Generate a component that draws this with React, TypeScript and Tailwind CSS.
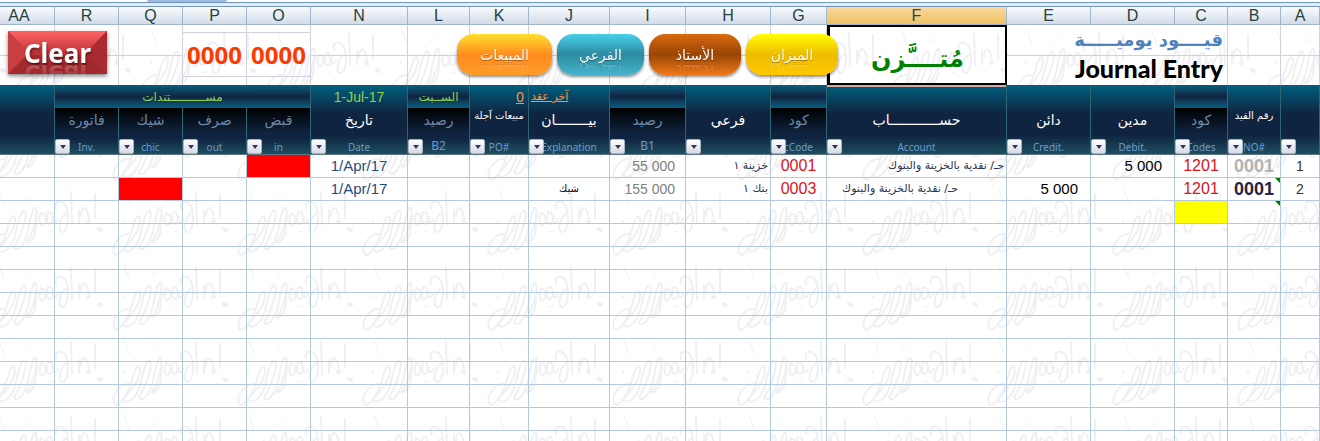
import type { ReactNode } from 'react';
import clsx from 'clsx';

interface Column {
  letter: string;
  width: string;
  title?: string;
  latin?: string;
  note?: string;
  small?: boolean;
  calculated?: boolean;
  noFilter?: boolean;
  latinSize?: string;
}

// The sheet runs from right to left, so column A comes first.
const columns: Column[] = [
  { letter: 'A', width: 'w-[39px]' },
  { letter: 'B', width: 'w-[53px]', title: 'رقم القيد', latin: 'NO#', small: true },
  { letter: 'C', width: 'w-[53px]', title: 'كود', latin: 'Codes', calculated: true },
  { letter: 'D', width: 'w-[84px]', title: 'مدين', latin: 'Debit.' },
  { letter: 'E', width: 'w-[84px]', title: 'دائن', latin: 'Credit.' },
  { letter: 'F', width: 'w-[180px]', title: 'حســــــــــــاب', latin: 'Account' },
  { letter: 'G', width: 'w-[56px]', title: 'كود', latin: 'cCode', calculated: true },
  { letter: 'H', width: 'w-[85px]', title: 'فرعي' },
  { letter: 'I', width: 'w-[76px]', title: 'رصيد', latin: 'B1', calculated: true, latinSize: 'text-xs' },
  { letter: 'J', width: 'w-[81px]', title: 'بيــــــــان', latin: 'Explanation', note: 'آخر عقد' },
  { letter: 'K', width: 'w-[59px]', title: 'مبيعات آجلة', latin: 'PO#', note: '0', small: true },
  { letter: 'L', width: 'w-[62px]', title: 'رصيد', latin: 'B2', note: 'الســبت', calculated: true, latinSize: 'text-xs' },
  { letter: 'N', width: 'w-[97px]', title: 'تاريخ', latin: 'Date', note: '1-Jul-17' },
  { letter: 'O', width: 'w-[64px]', title: 'قبض', latin: 'in', calculated: true },
  { letter: 'P', width: 'w-[64px]', title: 'صرف', latin: 'out', calculated: true },
  { letter: 'Q', width: 'w-[64px]', title: 'شيك', latin: 'chic', calculated: true },
  { letter: 'R', width: 'w-[64px]', title: 'فاتورة', latin: 'Inv.', calculated: true },
  { letter: 'AA', width: 'w-[55px]', noFilter: true },
];

const documentColumns = ['O', 'P', 'Q', 'R'];

interface Cell {
  content?: ReactNode;
  className?: string;
  flagged?: boolean;
}

const rowNumberCell = 'text-center text-sm text-[#333]';
const codeCell = 'text-center text-base text-[#d8141c]';
const dateCell = 'text-center text-[15px] text-[#1f4e79]';
const amountCell = 'pr-3 text-right text-[15px]';
const balanceCell = 'pr-[10px] text-right text-sm text-[#7f7f7f]';
const arabicCell = "font-['DejaVu_Sans'] text-[11px] text-[#26324f] text-right";

const entries: Record<string, Cell>[] = [
  {
    A: { content: '1', className: rowNumberCell },
    B: { content: '0001', className: 'text-center text-lg font-bold text-[#b3b3b3]' },
    C: { content: '1201', className: codeCell },
    D: { content: '5 000', className: amountCell },
    F: { content: 'حـ/ نقدية بالخزينة والبنوك', className: `${arabicCell} pr-[2px]` },
    G: { content: '0001', className: codeCell },
    H: { content: 'خزينة ١', className: `${arabicCell} pr-[2px]` },
    I: { content: '55 000', className: balanceCell },
    N: { content: '1/Apr/17', className: dateCell },
    O: { className: 'bg-[#ff0000]' },
  },
  {
    A: { content: '2', className: rowNumberCell },
    B: { content: '0001', className: 'text-center text-lg font-bold text-[#2a2240]', flagged: true },
    C: { content: '1201', className: codeCell },
    E: { content: '5 000', className: amountCell },
    F: { content: 'حـ/ نقدية بالخزينة والبنوك', className: `${arabicCell} pr-12` },
    G: { content: '0003', className: codeCell },
    H: { content: 'بنك ١', className: `${arabicCell} pr-[2px]` },
    I: { content: '155 000', className: balanceCell },
    J: { content: 'شيك', className: "font-['DejaVu_Sans'] text-center text-[10px]" },
    N: { content: '1/Apr/17', className: dateCell },
    Q: { className: 'bg-[#ff0000]' },
  },
  {
    B: { flagged: true },
    C: { className: 'bg-[#ffff00]' },
  },
  ...Array.from({ length: 10 }, () => ({})),
];

const shortcuts = [
  { label: 'الميزان', className: 'w-[92px] from-[#ffff00] via-[#eebc00] to-[#ffc800]' },
  { label: 'الأستاذ', className: 'w-[92px] from-[#d96a10] via-[#994505] to-[#f07818]' },
  { label: 'الفرعي', className: 'w-[87px] from-[#48d0ea] via-[#2c8ba0] to-[#45b4cc]' },
  { label: 'المبيعات', className: 'w-[95px] from-[#ffe030] via-[#ff8c1e] to-[#ff9c28]' },
];

const Scribble = () => (
  <g fill="none" stroke="#f0f0f2" strokeWidth="2" strokeLinecap="round">
    <path d="M12 2L17 16" strokeWidth="1" />
    <path d="M11 33v1" />
    <path d="M17 46C8 45 -1 58 2 65C5 72 16 57 20 42C23 29 28 24 28 32C28 44 14 58 11 61C14 68 24 61 28 48C31 35 34 20 38 23C41 27 34 49 27 59C30 66 38 56 41 43C44 28 46 18 49 20C51 25 46 48 40 53C38 57 46 53 48 46L50 27" />
    <path d="M54 25C51 32 53 39 56 37C60 34 59 25 55 26M61 24C59 30 60 37 63 36C67 34 66 25 63 24" />
    <path d="M69 21C66 12 77 10 80 21C83 33 79 45 75 44C70 42 73 29 80 25M67 29C65 34 69 37 71 31" />
    <path d="M84 4L85 36M92 22V35M94 28C94 16 101 18 102 33" />
    <path d="M108 6V30" />
    <path d="M101 34h1M112 41l2 1" strokeWidth="4" />
    <path d="M40 13l4-3M62 44l4-1" strokeWidth="1" />
  </g>
);

const Watermark = () => (
  <svg className="absolute inset-0 h-full w-full" aria-hidden="true">
    <defs>
      <pattern id="frozen" x="15" y="29" width="125" height="75" patternUnits="userSpaceOnUse">
        <Scribble />
      </pattern>
      <pattern id="scrolling" x="112" y="38" width="125" height="75" patternUnits="userSpaceOnUse">
        <Scribble />
      </pattern>
    </defs>
    <rect width="100%" height="85" fill="url(#frozen)" />
    <rect y="85" width="100%" height="100%" fill="url(#scrolling)" />
  </svg>
);

const FilterButton = ({ label }: { label: string }) => (
  <button
    type="button"
    aria-label={`Filter ${label}`}
    className="absolute bottom-0 left-0 flex h-[15px] w-[15px] items-center justify-center rounded-[2px] border border-[#aab4c4] bg-linear-to-b from-white to-[#d5dae4]"
  >
    <svg width="6" height="4" viewBox="0 0 6 4">
      <path d="M0 0h6L3 4z" fill="#33335c" />
    </svg>
  </button>
);

const HeaderCell = ({ column }: { column: Column }) => {
  const { letter, title, latin, note, small, calculated, noFilter, latinSize } = column;
  return (
    <th
      rowSpan={calculated ? 1 : 2}
      className={clsx(
        'relative border-r border-b border-r-[#2f6672] border-b-[#5f7682] p-0 align-top font-normal',
        calculated
          ? 'bg-[linear-gradient(#000,#0f2440_55%,#0f2440_65%,#1d4e5f)]'
          : 'bg-[linear-gradient(#00607f,#0f2440_42%,#0f2440_72%,#1d4e5f)]',
      )}
    >
      {!calculated && (
        <div
          dir="ltr"
          className={clsx(
            'h-[23px] leading-6',
            letter === 'N' && 'text-center text-sm text-[#92d050]',
            letter === 'J' && "pl-[2px] text-left font-['DejaVu_Sans'] text-[11px] text-[#f79646] underline",
            letter === 'K' && "pr-1 text-right font-['Noto_Sans'] text-sm text-[#f79646] underline",
          )}
        >
          {note}
        </div>
      )}
      <div
        className={clsx(
          "h-6 font-['DejaVu_Sans'] whitespace-nowrap",
          small ? 'text-[10px] leading-4' : 'text-sm leading-6',
          calculated ? 'text-[#7089a8]' : 'text-white',
        )}
      >
        {title}
      </div>
      <div
        className={clsx(
          "absolute inset-x-0 bottom-0 font-['Noto_Sans'] text-[#6f9bcb]",
          latinSize ? `${latinSize} leading-4` : 'text-[10px] leading-[14px]',
        )}
        dir="ltr"
      >
        {latin}
      </div>
      {letter === 'F' && <div className="absolute inset-x-0 top-0 h-[2px] bg-[#dca6a0]" />}
      {!noFilter && <FilterButton label={letter} />}
    </th>
  );
};

const bannerLine = 'border-r border-b border-[#cfd0e2] p-0';
const bannerSide = 'border-r border-[#cfd0e2] p-0';
const groupBand =
  "border-r border-[#2f6672] bg-linear-to-b from-[#00607f] via-[#0f2440] to-[#00607f] p-0 font-['DejaVu_Sans'] text-xs leading-5 font-normal text-[#92d050]";

export default function App() {
  return (
    <div dir="rtl" className="relative h-screen overflow-hidden bg-white font-['Liberation_Sans','DejaVu_Sans',sans-serif]">
      <Watermark />
      <div dir="ltr" className="relative h-[6px] bg-[#e3edf8]">
        <div className="h-[3px] border-b border-[#6f94bf] bg-white">
          <div className="ml-[147px] h-[2px] w-20 rounded-b-sm bg-[#9dbbe0]" />
        </div>
      </div>
      <table className="relative w-full table-fixed border-separate border-spacing-0">
        <colgroup>
          {columns.map(({ letter, width }) => (
            <col key={letter} className={width} />
          ))}
        </colgroup>
        <thead>
          <tr className="h-[19px]">
            {columns.map(({ letter }) => (
              <th
                key={letter}
                className={clsx(
                  'border-t border-r border-b border-t-[#6f94bf] border-r-[#9eb6ce] border-b-[#9eb6ce] p-0 text-base leading-4 font-normal',
                  letter === 'F'
                    ? 'bg-linear-to-b from-[#f9d99f] to-[#f1c15f] text-[#2f3f5f]'
                    : 'bg-linear-to-b from-[#f9fcfd] to-[#d3dbe9] text-[#27413e]',
                  letter === 'AA' && 'pr-4',
                )}
              >
                {letter}
              </th>
            ))}
          </tr>

          <tr className="h-[8px]">
            <td rowSpan={2} className={bannerLine} />
            <td rowSpan={2} className={bannerLine} />
            <td
              rowSpan={2}
              colSpan={3}
              className={clsx(bannerLine, "pr-1 text-right font-['DejaVu_Sans'] text-lg leading-6 font-bold text-[#4f81bd]")}
            >
              قيــــود يوميـــــة
            </td>
            <td
              rowSpan={4}
              className="border-2 border-l-3 border-black p-0 pt-2 text-center font-['DejaVu_Sans'] text-2xl leading-10 font-bold text-[#008000]"
            >
              مُتــــَّزن
            </td>
            {['G', 'H', 'I', 'J', 'K', 'L', 'N'].map((letter) => (
              <td key={letter} rowSpan={2} className={bannerLine} />
            ))}
            <td className={bannerLine} />
            <td className={bannerLine} />
            <td rowSpan={2} className={bannerLine} />
            <td rowSpan={2} className={bannerLine} />
            <td rowSpan={2} className={bannerLine} />
          </tr>
          <tr className="h-[23px]">
            {['O', 'P'].map((letter) => (
              <td
                key={letter}
                rowSpan={2}
                className={clsx(bannerLine, "text-center font-['Noto_Sans'] text-2xl leading-8 font-bold text-[#ff3a00]")}
              >
                0000
              </td>
            ))}
          </tr>
          <tr className="h-[21px]">
            <td rowSpan={2} className={bannerSide} />
            <td rowSpan={2} className={bannerSide} />
            <td
              rowSpan={2}
              colSpan={3}
              className="border-r border-[#cfd0e2] p-0 pr-1 text-right align-top font-['Lato'] text-[25px] leading-6 font-black"
            >
              Journal Entry
            </td>
            {['G', 'H', 'I', 'J', 'K', 'L', 'N', 'Q', 'R', 'AA'].map((letter) => (
              <td key={letter} rowSpan={2} className={bannerSide} />
            ))}
          </tr>
          <tr className="h-[8px]">
            <td className={bannerSide} />
            <td className={bannerSide} />
          </tr>

          <tr className="h-[23px]">
            {columns
              .filter(({ letter }) => !documentColumns.includes(letter) && letter !== 'AA')
              .map((column) =>
                column.calculated ? (
                  <th key={column.letter} className={groupBand}>
                    {column.note}
                  </th>
                ) : (
                  <HeaderCell key={column.letter} column={column} />
                ),
              )}
            <th colSpan={4} className={groupBand}>
              مســــــــــتندات
            </th>
            <HeaderCell column={columns[columns.length - 1]} />
          </tr>
          <tr className="h-[47px]">
            {columns
              .filter(({ calculated }) => calculated)
              .map((column) => (
                <HeaderCell key={column.letter} column={column} />
              ))}
          </tr>
        </thead>
        <tbody>
          {entries.map((entry, index) => (
            <tr key={index} className="h-[23px]">
              {columns.map(({ letter }) => {
                const cell = entry[letter];
                return (
                  <td
                    key={letter}
                    className={clsx(
                      'relative border-r border-b border-[#b4c8de] p-0 leading-[22px] whitespace-nowrap',
                      cell?.className,
                    )}
                  >
                    <bdi>{cell?.content}</bdi>
                    {cell?.flagged && (
                      <svg className="absolute top-0 right-0" width="5" height="5" viewBox="0 0 5 5">
                        <path d="M0 0h5v5z" fill="#008000" />
                      </svg>
                    )}
                  </td>
                );
              })}
            </tr>
          ))}
        </tbody>
      </table>

      <button
        type="button"
        className="absolute top-[31px] left-2 h-[43px] w-[99px] bg-[#b93236] font-['Noto_Sans'] text-[26px] leading-8 font-bold text-white shadow-[0_2px_4px_rgba(0,0,0,0.5)]"
      >
        <svg className="absolute inset-0" width="99" height="43" viewBox="0 0 99 43" aria-hidden="true">
          <defs>
            <linearGradient id="bevel" x1="0" y1="0" x2="0" y2="1">
              <stop offset="0" stopColor="#ff6464" />
              <stop offset="1" stopColor="#c8383c" />
            </linearGradient>
          </defs>
          <path d="M0 0h99L80 20H19z" fill="url(#bevel)" />
          <path d="M0 0l19 20v4L0 43z" fill="#c93e40" />
          <path d="M99 0L80 20v4l19 19z" fill="#a92c31" />
          <path d="M0 43l19-19h61l19 19z" fill="#a22a2e" />
        </svg>
        <span
          dir="ltr"
          className="relative inline-block [-webkit-box-reflect:below_-10px_linear-gradient(transparent_40%,rgba(255,255,255,0.35))] [text-shadow:1px_2px_2px_rgba(60,0,0,0.6)]"
        >
          Clear
        </span>
      </button>

      <div className="absolute top-[34px] left-[457px] flex gap-[5px]">
        {shortcuts.map(({ label, className }) => (
          <button
            key={label}
            type="button"
            className={clsx(
              "h-[41px] rounded-2xl bg-linear-to-b font-['DejaVu_Sans'] text-sm text-white shadow-[0_2px_3px_rgba(0,0,0,0.45)]",
              className,
            )}
          >
            <span className="inline-block [-webkit-box-reflect:below_-5px_linear-gradient(transparent_40%,rgba(255,255,255,0.35))] [text-shadow:0_1px_1px_rgba(0,0,0,0.4)]">
              {label}
            </span>
          </button>
        ))}
      </div>
    </div>
  );
}
